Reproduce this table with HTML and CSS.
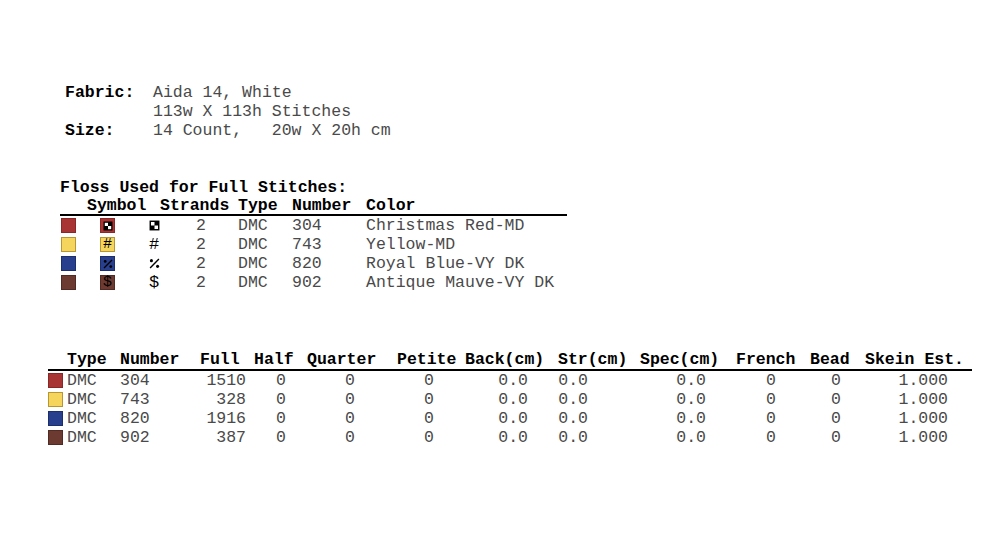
FILE: index.html
```html
<!DOCTYPE html>
<html>
<head>
<meta charset="utf-8">
<link rel="stylesheet" href="styles.css">
</head>
<body>
<div class="page">
  <div class="fabric">
    <div class="lbl">Fabric:</div><div class="val">Aida 14, White</div>
    <div class="lbl"></div><div class="val">113w X 113h Stitches</div>
    <div class="lbl">Size:</div><div class="val">14 Count,   20w X 20h cm</div>
  </div>

  <div class="floss">
    <div class="title">Floss Used for Full Stitches:</div>
    <div class="frow fhead">
      <div></div><div>Symbol</div><div>Strands</div><div>Type</div><div>Number</div><div>Color</div>
    </div>
    <div class="frow">
      <div><span class="sw red"></span></div>
      <div class="symcell">
        <span class="sbox red"><svg class="ico" viewBox="0 0 10 10"><rect x="0.5" y="0.5" width="9" height="9" fill="#000"/><rect x="1.8" y="1.8" width="3.2" height="3.2" fill="#fff"/><rect x="5" y="5" width="3.2" height="3.2" fill="#fff"/></svg></span>
        <span class="glyph"><svg class="ico" viewBox="0 0 10 10"><rect x="0.5" y="0.5" width="9" height="9" fill="#000"/><rect x="1.8" y="1.8" width="3.2" height="3.2" fill="#fff"/><rect x="5" y="5" width="3.2" height="3.2" fill="#fff"/></svg></span>
      </div>
      <div class="strands">2</div><div>DMC</div><div>304</div><div>Christmas Red-MD</div>
    </div>
    <div class="frow">
      <div><span class="sw yel"></span></div>
      <div class="symcell">
        <span class="sbox yel"><span class="tsym">#</span></span>
        <span class="glyph"><span class="tsym">#</span></span>
      </div>
      <div class="strands">2</div><div>DMC</div><div>743</div><div>Yellow-MD</div>
    </div>
    <div class="frow">
      <div><span class="sw blu"></span></div>
      <div class="symcell">
        <span class="sbox blu"><svg class="ico" viewBox="0 0 10 10"><line x1="1" y1="9" x2="9" y2="1" stroke="#000" stroke-width="1.3"/><circle cx="2.2" cy="2.4" r="1.4" fill="#000"/><circle cx="7.8" cy="7.6" r="1.4" fill="#000"/></svg></span>
        <span class="glyph"><svg class="ico" viewBox="0 0 10 10"><line x1="1" y1="9" x2="9" y2="1" stroke="#000" stroke-width="1.3"/><circle cx="2.2" cy="2.4" r="1.4" fill="#000"/><circle cx="7.8" cy="7.6" r="1.4" fill="#000"/></svg></span>
      </div>
      <div class="strands">2</div><div>DMC</div><div>820</div><div>Royal Blue-VY DK</div>
    </div>
    <div class="frow">
      <div><span class="sw mau"></span></div>
      <div class="symcell">
        <span class="sbox mau"><span class="tsym">$</span></span>
        <span class="glyph"><span class="tsym">$</span></span>
      </div>
      <div class="strands">2</div><div>DMC</div><div>902</div><div>Antique Mauve-VY DK</div>
    </div>
  </div>

  <div class="usage">
    <div class="urow uhead">
      <div></div><div>Type</div><div>Number</div><div>Full</div><div>Half</div><div>Quarter</div><div>Petite</div><div>Back(cm)</div><div>Str(cm)</div><div>Spec(cm)</div><div>French</div><div>Bead</div><div>Skein Est.</div>
    </div>
    <div class="urow">
      <div><span class="sw red"></span></div><div>DMC</div><div>304</div><div class="c-full">1510</div><div class="c-half">0</div><div class="c-quar">0</div><div class="c-pet">0</div><div class="c-back">0.0</div><div class="c-str">0.0</div><div class="c-spec">0.0</div><div class="c-fr">0</div><div class="c-bead">0</div><div class="c-sk">1.000</div>
    </div>
    <div class="urow">
      <div><span class="sw yel"></span></div><div>DMC</div><div>743</div><div class="c-full">328</div><div class="c-half">0</div><div class="c-quar">0</div><div class="c-pet">0</div><div class="c-back">0.0</div><div class="c-str">0.0</div><div class="c-spec">0.0</div><div class="c-fr">0</div><div class="c-bead">0</div><div class="c-sk">1.000</div>
    </div>
    <div class="urow">
      <div><span class="sw blu"></span></div><div>DMC</div><div>820</div><div class="c-full">1916</div><div class="c-half">0</div><div class="c-quar">0</div><div class="c-pet">0</div><div class="c-back">0.0</div><div class="c-str">0.0</div><div class="c-spec">0.0</div><div class="c-fr">0</div><div class="c-bead">0</div><div class="c-sk">1.000</div>
    </div>
    <div class="urow">
      <div><span class="sw mau"></span></div><div>DMC</div><div>902</div><div class="c-full">387</div><div class="c-half">0</div><div class="c-quar">0</div><div class="c-pet">0</div><div class="c-back">0.0</div><div class="c-str">0.0</div><div class="c-spec">0.0</div><div class="c-fr">0</div><div class="c-bead">0</div><div class="c-sk">1.000</div>
    </div>
  </div>
</div>
</body>
</html>
```

FILE: styles.css
```css
html, body {
  margin: 0;
  padding: 0;
  background: #fff;
}
body {
  font-family: "Liberation Mono", "Courier New", monospace;
  font-size: 16.5px;
  line-height: 19px;
  color: #4a4a4a;
}
.page {
  padding-top: 83px;
}

/* Fabric block */
.fabric {
  margin-left: 65px;
  display: grid;
  grid-template-columns: 88px auto;
}
.fabric .lbl {
  font-weight: bold;
  color: #000;
}
.fabric .val {
  white-space: pre;
}

/* Floss table */
.floss {
  margin-top: 38px;
  margin-left: 60px;
  width: 507px;
}
.title {
  font-weight: bold;
  color: #000;
}
.frow {
  display: grid;
  grid-template-columns: 27px 73px 78px 54px 74px 201px;
  height: 19px;
  align-items: center;
}
.fhead {
  height: 17px;
  line-height: 17px;
  font-weight: bold;
  color: #000;
  border-bottom: 2px solid #000;
}
.frow > div {
  display: flex;
  align-items: center;
  white-space: pre;
}
.frow .sw {
  margin-left: 1px;
}
.symcell {
  height: 19px;
}
.sbox {
  margin-left: 13px;
  width: 15px;
  height: 15px;
  box-sizing: border-box;
  display: flex;
  align-items: center;
  justify-content: center;
}
.sbox .ico {
  width: 10px;
  height: 10px;
}
.sbox .tsym {
  font-size: 15px;
  line-height: 13px;
  color: #000;
}
.glyph {
  margin-left: 33px;
  width: 12px;
  height: 19px;
  display: flex;
  align-items: center;
  justify-content: center;
}
.glyph .ico {
  width: 11px;
  height: 11px;
}
.glyph .tsym {
  color: #000;
  font-size: 17px;
}
.strands {
  padding-left: 36px;
}

/* Swatches */
.sw {
  display: inline-block;
  width: 15px;
  height: 15px;
  box-sizing: border-box;
}
.red { background: #a93434; border: 1px solid #8a2828; }
.yel { background: #f5d55b; border: 1px solid #b99634; }
.blu { background: #283f8d; border: 1px solid #1c2e6b; }
.mau { background: #6d3a32; border: 1px solid #512a24; }

/* Usage table */
.usage {
  margin-top: 59px;
  margin-left: 48px;
  width: 924px;
}
.urow {
  display: grid;
  grid-template-columns: 19px 53px 80px 54px 53px 90px 68px 93px 82px 96px 74px 55px 107px;
  height: 19px;
  align-items: center;
}
.urow > div {
  white-space: pre;
}
.urow .sw {
  display: block;
}
.uhead {
  height: 18px;
  line-height: 18px;
  font-weight: bold;
  color: #000;
  border-bottom: 2px solid #000;
}
.c-full, .c-half, .c-quar, .c-pet, .c-back, .c-str,
.c-spec, .c-fr, .c-bead, .c-sk {
  text-align: right;
}
.c-full { padding-right: 8px; }
.c-half { padding-right: 21px; }
.c-quar { padding-right: 42px; }
.c-pet  { padding-right: 31px; }
.c-back { padding-right: 30px; }
.c-str  { padding-right: 52px; }
.c-spec { padding-right: 30px; }
.c-fr   { padding-right: 34px; }
.c-bead { padding-right: 24px; }
.c-sk   { padding-right: 24px; }
```
